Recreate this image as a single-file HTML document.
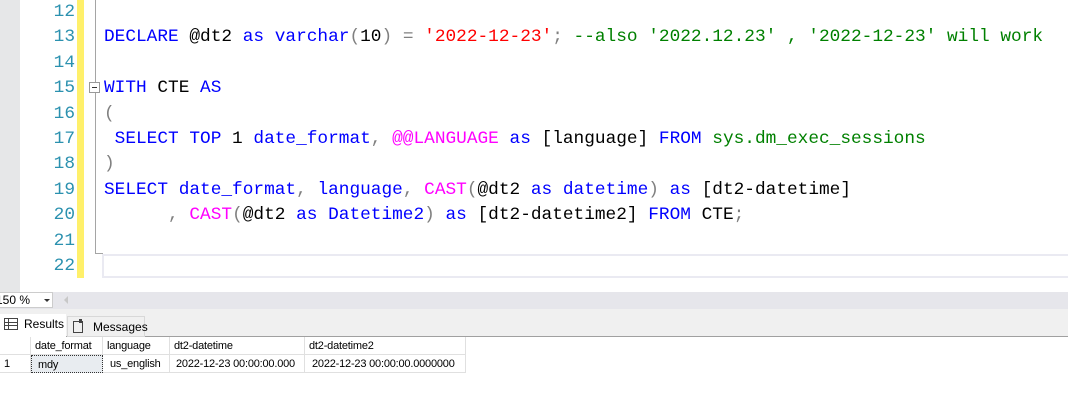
<!DOCTYPE html><html><head><style>
body{margin:0;width:1068px;height:408px;overflow:hidden;background:#fff;position:relative;font-family:"Liberation Sans",sans-serif}
.ed{position:absolute;left:0;top:0;width:1068px;height:292px;background:#fff}
.strip{position:absolute;left:0;top:0;width:20px;height:292px;background:#e6e7e8}
.ybar{position:absolute;left:77px;top:0;width:7px;height:278px;background:#fff06a}
.vl{position:absolute;left:95px;top:0;width:1px;height:254px;background:#a5a5a5}
.ln{position:absolute;left:20px;width:55px;text-align:right;color:#2b91af;font:17.8px/25.4px "Liberation Mono",monospace}
.cd{position:absolute;left:104px;white-space:pre;font:17.8px/25.4px "Liberation Mono",monospace;color:#000}
.k{color:#0000ff}.s{color:#ff0000}.c{color:#008000}.f{color:#ff00ff}.g{color:#808080}
.cur{position:absolute;left:102px;top:254px;width:980px;height:20px;border:2px solid #eaeaf2;border-right:none}
.gr{position:absolute;top:337px;height:18px;border-right:1px solid #e0e0e0;border-bottom:1px solid #e0e0e0;font-size:11px;letter-spacing:-0.2px;line-height:18px;padding-left:4px;box-sizing:border-box;white-space:nowrap;overflow:hidden}
.dr{top:355px}
</style></head><body>
<div class="ed">
<div class="strip"></div><div class="ybar"></div><div class="vl"></div>
<div style="position:absolute;left:95px;top:253px;width:8px;height:1px;background:#a5a5a5"></div>
<div style="position:absolute;left:89px;top:82px;width:11px;height:11px;border:1px solid #999;box-sizing:border-box;background:#fff"><div style="position:absolute;left:2px;top:4px;width:5px;height:1px;background:#333"></div></div>
<div class="cur"></div>
<div class="ln" style="top:0">12</div><div class="ln" style="top:25.4px">13</div><div class="ln" style="top:50.8px">14</div><div class="ln" style="top:76.2px">15</div><div class="ln" style="top:101.6px">16</div><div class="ln" style="top:127px">17</div><div class="ln" style="top:152.4px">18</div><div class="ln" style="top:177.8px">19</div><div class="ln" style="top:203.2px">20</div><div class="ln" style="top:228.6px">21</div><div class="ln" style="top:254px">22</div>
<div class="cd" style="top:25.4px"><span class="k">DECLARE</span> @dt2 <span class="k">as</span> <span class="k">varchar</span><span class="g">(</span>10<span class="g">)</span> <span class="g">=</span> <span class="s">'2022-12-23'</span><span class="g">;</span> <span class="c">--also '2022.12.23' , '2022-12-23' will work</span></div>
<div class="cd" style="top:76.2px"><span class="k">WITH</span> CTE <span class="k">AS</span></div>
<div class="cd" style="top:101.6px"><span class="g">(</span></div>
<div class="cd" style="top:127px"> <span class="k">SELECT</span> <span class="k">TOP</span> 1 <span class="k">date_format</span><span class="g">,</span> <span class="f">@@LANGUAGE</span> <span class="k">as</span> [language] <span class="k">FROM</span> <span class="c">sys.dm_exec_sessions</span></div>
<div class="cd" style="top:152.4px"><span class="g">)</span></div>
<div class="cd" style="top:177.8px"><span class="k">SELECT</span> <span class="k">date_format</span><span class="g">,</span> <span class="k">language</span><span class="g">,</span> <span class="f">CAST</span><span class="g">(</span>@dt2 <span class="k">as</span> <span class="k">datetime</span><span class="g">)</span> <span class="k">as</span> [dt2-datetime]</div>
<div class="cd" style="top:203.2px">      <span class="g">,</span> <span class="f">CAST</span><span class="g">(</span>@dt2 <span class="k">as</span> <span class="k">Datetime2</span><span class="g">)</span> <span class="k">as</span> [dt2-datetime2] <span class="k">FROM</span> CTE<span class="g">;</span></div>
</div>
<div style="position:absolute;left:0;top:292px;width:1068px;height:17px;background:#e6e6eb"></div>
<div style="position:absolute;left:0;top:292px;width:53px;height:16px;background:#fff;border:1px solid #ccc;border-left:none;box-sizing:border-box;font-size:12px;line-height:14px;overflow:hidden"><span style="position:absolute;left:-4px;top:0">150 %</span><span style="position:absolute;left:44px;top:6px;border:3px solid transparent;border-top:3px solid #333"></span></div>
<div style="position:absolute;left:60px;top:296px;border:4px solid transparent;border-right:4px solid #c8c8c8"></div>
<div style="position:absolute;left:0;top:309px;width:1068px;height:27px;background:#f0f0f0;border-bottom:1px solid #a0a0a0"></div>
<div style="position:absolute;left:0;top:314px;width:66px;height:23px;background:#fff;font-size:12px;line-height:20px"><span style="position:absolute;left:4px;top:4px;width:12px;height:10px;border:1px solid #444;background:linear-gradient(#444,#444) 0 3px/100% 1px no-repeat,linear-gradient(#444,#444) 0 6px/100% 1px no-repeat,linear-gradient(90deg,#444,#444) 3px 0/1px 100% no-repeat"></span><span style="position:absolute;left:24px;top:0">Results</span></div>
<div style="position:absolute;left:67px;top:316px;width:76px;height:19px;border:1px solid #d8d8d8;font-size:12px;line-height:20px"><span style="position:absolute;left:5px;top:4px;width:8px;height:10px;border:1px solid #444"></span><span style="position:absolute;left:11px;top:2px;width:3px;height:4px;background:#444"></span><span style="position:absolute;left:25px;top:0">Messages</span></div>
<div class="gr" style="left:0;width:31px"></div>
<div class="gr" style="left:31px;width:72px">date_format</div>
<div class="gr" style="left:103px;width:67px">language</div>
<div class="gr" style="left:170px;width:135px">dt2-datetime</div>
<div class="gr" style="left:305px;width:161px">dt2-datetime2</div>
<div class="gr dr" style="left:0;width:31px">1</div>
<div class="gr dr" style="left:31px;width:72px;background:#e8ecf0;border:1px dotted #333;padding-left:6px">mdy</div>
<div class="gr dr" style="left:103px;width:67px;padding-left:7px">us_english</div>
<div class="gr dr" style="left:170px;width:135px;padding-left:6px">2022-12-23 00:00:00.000</div>
<div class="gr dr" style="left:305px;width:161px;padding-left:7px">2022-12-23 00:00:00.0000000</div>
</body></html>
